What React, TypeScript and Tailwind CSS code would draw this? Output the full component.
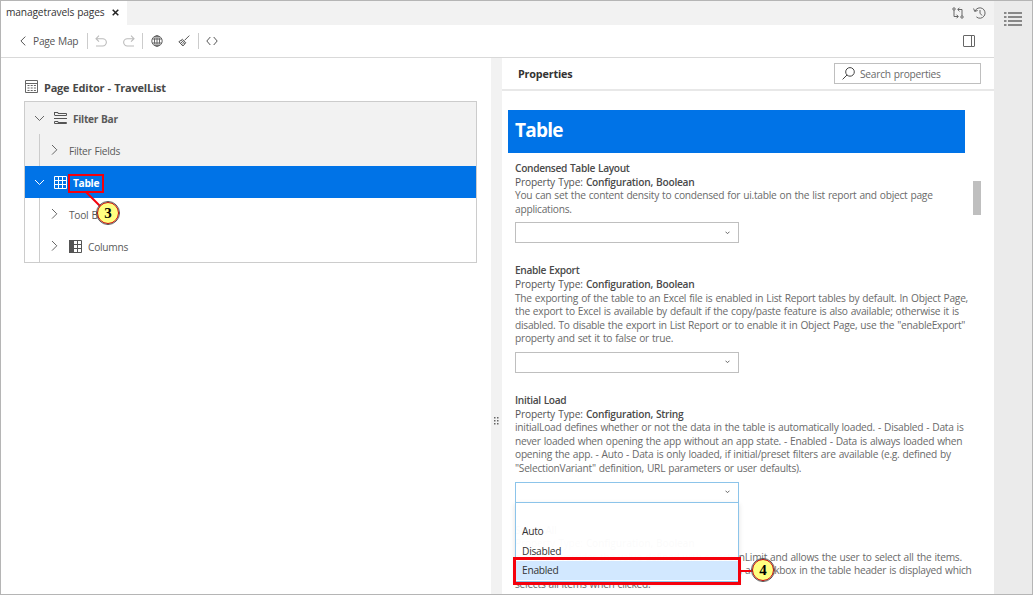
import type { ReactNode } from "react";

function ChevronDown({ className }: { className: string }) {
  return (
    <svg width="11" height="7" viewBox="0 0 11 7" fill="none" stroke="currentColor" strokeWidth="1" className={className}>
      <path d="M1 1 5.5 5.5 10 1" />
    </svg>
  );
}

function ChevronRight() {
  return (
    <svg width="7" height="12" viewBox="0 0 7 12" fill="none" stroke="currentColor" strokeWidth="1" className="shrink-0 text-[#666]">
      <path d="M1 1 5.8 5.8 1 10.6" />
    </svg>
  );
}

function TopBar() {
  return (
    <div className="flex h-6 shrink-0 justify-between bg-[#f2f2f2]">
      <div className="flex w-[126px] items-center bg-white pl-[5px] text-[#333]">
        <span className="w-[106px] whitespace-nowrap tracking-[-0.14px]">managetravels pages</span>
        <svg width="7" height="7" viewBox="0 0 7 7" stroke="#222" strokeWidth="1.5" className="mb-[2px]">
          <path d="M.7.7l5.6 5.6M6.3.7.7 6.3" />
        </svg>
      </div>
      <div className="flex items-center gap-[9px] pb-px pr-[8px] text-[#666]">
        <svg width="12" height="12" viewBox="0 0 12 12" fill="none" stroke="currentColor" strokeWidth="1">
          <circle cx="2" cy="2" r="1.2" />
          <circle cx="10" cy="10" r="1.2" />
          <path d="M2 3.2v6.3h4M4.5 7.7 6.3 9.5 4.5 11.3M10 8.8V2.5H6M7.5.7 5.7 2.5 7.5 4.3" />
        </svg>
        <svg width="13" height="12" viewBox="0 0 13 12" fill="none" stroke="currentColor" strokeWidth="1">
          <path d="M2 4.2A5.2 5.2 0 1 1 3.4 9.9M.6 1.5 1.7 4.4 4.7 3.5M7 3v3.2L9 8.5" />
        </svg>
      </div>
    </div>
  );
}

function Divider() {
  return <div className="h-4 w-px shrink-0 bg-[#ccc]" />;
}

function Toolbar() {
  return (
    <div className="flex h-[33px] shrink-0 items-center border-b border-[#d9d9d9] pl-[19px] pr-[19px] text-[#555]">
      <svg width="6" height="10" viewBox="0 0 6 10" fill="none" stroke="currentColor" strokeWidth="1">
        <path d="M5.3.6.9 5l4.4 4.4" />
      </svg>
      <span className="ml-[7px] mt-[2px] w-[54px]">Page Map</span>
      <Divider />
      <svg width="12" height="12" viewBox="0 0 12 12" fill="none" stroke="#bbb" strokeWidth="1.1" className="ml-[7px]">
        <path d="M4 .7 1 3.7l3 3M1 3.700h6.700a3.600 3.600 0 0 1 0 7.300H1" />
      </svg>
      <svg width="12" height="12" viewBox="0 0 12 12" fill="none" stroke="#bbb" strokeWidth="1.1" className="ml-[16px]">
        <path d="M8 .7l3 3-3 3M11 3.700H4.300a3.600 3.600 0 0 0 0 7.300H11" />
      </svg>
      <div className="ml-[7px]"><Divider /></div>
      <svg width="12" height="12" viewBox="0 0 12 12" fill="none" stroke="#555" strokeWidth=".9" className="ml-2">
        <circle cx="6" cy="6" r="5.2" />
        <ellipse cx="6" cy="6" rx="2.5" ry="5.2" />
        <path d="M6 .8v10.4M1.3 4h9.4M1.3 8h9.4" />
      </svg>
      <svg width="12" height="12" viewBox="0 0 12 12" fill="none" stroke="#555" strokeWidth="1" className="ml-[15px]">
        <path d="M11.3.6 6.6 5.3M4.4 4.3l3.4 3.4-.8 1-3.7-3.5ZM3.3 5.2.9 6.7l4 4.3L7 8.7M2.5 8.2l1.700-1.300M3.800 9.700l1.400-1.500" />
      </svg>
      <div className="ml-2"><Divider /></div>
      <svg width="12" height="10" viewBox="0 0 12 10" fill="none" stroke="#555" strokeWidth="1" className="ml-[7px]">
        <path d="M4.3 1 .8 5l3.500 4M7.700 1l3.500 4-3.500 4" />
      </svg>
      <svg width="12" height="12" viewBox="0 0 12 12" fill="none" stroke="#666" strokeWidth="1" className="ml-auto">
        <rect x=".5" y=".5" width="11" height="11" rx=".5" />
        <path d="M8.500.5v11" />
      </svg>
    </div>
  );
}

function PageEditor() {
  return (
    <section className="flex w-[490px] shrink-0 flex-col pl-[23px] pr-[14px] pt-[22px] text-[#5a5a5a]">
      <h2 className="flex h-[14px] items-center pl-px text-[11px] font-bold tracking-[-0.22px] text-[#484848]">
        <svg width="13" height="13" viewBox="0 0 13 13" fill="none" stroke="#666" strokeWidth="1" className="mb-px mr-[6px]">
          <path d="M.5.5h12v12H.5ZM.5 3.500h12" />
          <path d="M2.500 5.500h8.500M2.500 8h8.500M2.500 10.500h8.500" strokeWidth="1.200" strokeDasharray="2 1.200" />
        </svg>
        <span className="mt-px">Page Editor - TravelList</span>
      </h2>
      <div className="mt-[7px] h-[162px] border border-[#ccc]">
        <div className="flex h-8 items-center bg-[#f2f2f2] pl-[9px]">
          <ChevronDown className="text-[#666]" />
          <svg width="13" height="12" viewBox="0 0 13 12" fill="none" stroke="#555" strokeWidth="1" className="ml-[9px]">
            <path d="M.5 0v3M0 .5h4v1h8.500v2H.5M0 6.500h13M.5 9.500H4v1h8.500v1H.5Z" />
          </svg>
          <span className="ml-[6px] mt-[3px] font-bold tracking-[-0.3px]">Filter Bar</span>
        </div>
        <div className="h-8 bg-[#f2f2f2] pl-[14px]">
          <div className="flex h-8 items-center border-l border-[#ccc] pl-[11px]">
            <ChevronRight />
            <span className="ml-[11px] mt-[3px]">Filter Fields</span>
          </div>
        </div>
        <div className="flex h-8 items-center bg-[#0073e7] pl-[9px] text-white">
          <ChevronDown className="text-white" />
          <svg width="13" height="13" viewBox="0 0 13 13" fill="none" stroke="white" strokeWidth="1" className="ml-[9px]">
            <path d="M.5.5h12v12H.5ZM4.500.5v12M8.500.5v12M.5 4.500h12M.5 8.500h12" />
          </svg>
          <span className="ml-[6px] mt-[3px] font-bold tracking-[-0.3px]">Table</span>
        </div>
        <div className="pl-[14px]">
          <div className="flex h-8 items-center border-l border-[#ccc] pl-[11px]">
            <ChevronRight />
            <span className="ml-[11px] mt-[3px]">Tool Bar</span>
          </div>
          <div className="flex h-8 items-center border-l border-[#ccc] pl-[11px]">
            <ChevronRight />
            <svg width="13" height="13" viewBox="0 0 13 13" fill="none" stroke="#555" strokeWidth="1" className="ml-[11px]">
              <path d="M0 0h4v13H0Z" fill="#555" stroke="none" />
              <path d="M.5.5h12v12H.5ZM4.500.5v12M8.500.5v12M4.500 4.500h8M4.500 8.500h8" />
            </svg>
            <span className="ml-[6px] mt-[3px]">Columns</span>
          </div>
        </div>
      </div>
    </section>
  );
}

function Select({ active = false, children }: { active?: boolean; children?: ReactNode }) {
  return (
    <div className={`relative mt-[6px] flex h-[21px] w-[224px] items-center justify-end border bg-white pr-[8px] ${active ? "border-[#8cc4ea]" : "border-[#bfbfbf]"}`}>
      <svg width="5" height="4" viewBox="0 0 5 4" fill="none" stroke="#666" strokeWidth="1">
        <path d="M.5.7 2.5 2.7 4.5.7" />
      </svg>
      {children}
    </div>
  );
}

type PropertyProps = { title: string; type: string; lines: string[]; children?: ReactNode };

function Property({ title, type, lines, children }: PropertyProps) {
  return (
    <div className="mb-[21px] text-[#6a6a6a]">
      <h4 className="font-semibold tracking-[-0.33px] text-[#4a4a4a]">{title}</h4>
      <p className="tracking-[-0.15px] text-[#555]">
        Property Type: <b className="font-semibold tracking-[-0.24px] text-[#4a4a4a]">{type}</b>
      </p>
      {lines.map((line) => (
        <p key={line} className="whitespace-nowrap">{line}</p>
      ))}
      {children}
    </div>
  );
}

function Options() {
  return (
    <ul className="absolute -left-px top-[19px] z-10 w-[224px] border border-[#8cc4ea] bg-white/98 pb-px text-[#333] shadow-[0_2px_5px_rgba(0,0,0,0.12)]">
      <li className="h-[20px]" />
      {["Auto", "Disabled", "Enabled"].map((option) => (
        <li key={option} className={`flex h-[19.3px] items-center pl-[6px] ${option === "Enabled" ? "bg-[#d2e8ff]" : ""}`}>
          {option}
        </li>
      ))}
    </ul>
  );
}

function Properties() {
  return (
    <section className="flex min-w-0 flex-1 flex-col">
      <header className="flex h-[33px] shrink-0 items-center justify-between border-b-2 border-[#e8e8e8] pl-4 pr-[13px]">
        <h3 className="text-[10.8px] font-bold tracking-[-0.18px] text-[#333]">Properties</h3>
        <label className="flex h-[21px] w-[147px] items-center border border-[#bfbfbf] pl-[7px] text-[#6a6a6a]">
          <svg width="13" height="13" viewBox="0 0 13 13" fill="none" stroke="#444" strokeWidth="1">
            <circle cx="8" cy="4.9" r="4.3" />
            <path d="M5 8 .6 12.4" />
          </svg>
          <span className="ml-[5px] mt-[2px]">Search properties</span>
        </label>
      </header>
      <div className="flex min-h-0 flex-1 justify-between pr-[13px] pt-[19px]">
        <div className="w-[463px] pl-[6px]">
          <h1 className="flex h-[43px] items-center bg-[#0073e7] pb-px pl-[7px] text-[19px] font-bold tracking-[-0.75px] text-white">Table</h1>
          <div className="pl-[7px] pt-[9px]">
            <Property
              title="Condensed Table Layout"
              type="Configuration, Boolean"
              lines={[
                "You can set the content density to condensed for ui.table on the list report and object page",
                "applications.",
              ]}
            >
              <Select />
            </Property>
            <Property
              title="Enable Export"
              type="Configuration, Boolean"
              lines={[
                "The exporting of the table to an Excel file is enabled in List Report tables by default. In Object Page,",
                "the export to Excel is available by default if the copy/paste feature is also available; otherwise it is",
                "disabled. To disable the export in List Report or to enable it in Object Page, use the \"enableExport\"",
                "property and set it to false or true.",
              ]}
            >
              <Select />
            </Property>
            <Property
              title="Initial Load"
              type="Configuration, String"
              lines={[
                "initialLoad defines whether or not the data in the table is automatically loaded. - Disabled - Data is",
                "never loaded when opening the app without an app state. - Enabled - Data is always loaded when",
                "opening the app. - Auto - Data is only loaded, if initial/preset filters are available (e.g. defined by",
                "\"SelectionVariant\" definition, URL parameters or user defaults).",
              ]}
            >
              <Select active>
                <Options />
              </Select>
            </Property>
            <Property
              title="Select All"
              type="Configuration, Boolean"
              lines={[
                "selectAll overrides the value defined with selectionLimit and allows the user to select all the items.",
                "When set to true, the select all feature is enabled, a checkbox in the table header is displayed which",
                "selects all items when clicked.",
              ]}
            />
          </div>
        </div>
        <div className="mt-[71px] h-[34px] w-2 bg-[#bfbfbf]" />
      </div>
    </section>
  );
}

function Badge({ children }: { children: ReactNode }) {
  return (
    <span className="flex h-[22px] w-[22px] items-center justify-center rounded-full border-[1.5px] border-[#d00000] bg-[#ffff80] font-['Liberation_Serif',serif] text-[15px] font-bold leading-none tracking-normal text-black outline outline-[0.5px] outline-[#555]">
      {children}
    </span>
  );
}

export default function App() {
  return (
    <div className="relative flex h-[595px] w-[1033px] overflow-hidden border border-[#b5b5b5] bg-white font-['Open_Sans',sans-serif] text-[10.2px] leading-[13.6px] tracking-[-0.25px] [word-spacing:0.6px]">
      <main className="flex min-w-0 flex-1 flex-col">
        <TopBar />
        <Toolbar />
        <div className="flex min-h-0 flex-1">
          <PageEditor />
          <div className="flex w-[11px] shrink-0 items-center justify-center bg-[#f2f2f2]">
            <svg width="5" height="8" viewBox="0 0 5 8" fill="#666" className="mt-[190px]">
              <path d="M0 0h1.500v1.500H0ZM3 0h1.500v1.500H3ZM0 3h1.500v1.500H0ZM3 3h1.500v1.500H3ZM0 6h1.500v1.500H0ZM3 6h1.500v1.500H3Z" />
            </svg>
          </div>
          <Properties />
        </div>
      </main>
      <aside className="flex w-[38px] shrink-0 justify-center bg-[#ebebeb] pt-[11px]">
        <svg width="18" height="15" viewBox="0 0 18 15" fill="#888">
          <path d="M0 0h2.500v2H0ZM4 0h14v2H4ZM0 4h2.500v2H0ZM4 4h14v2H4ZM0 8h2.500v2H0ZM4 8h14v2H4ZM0 12h2.500v2H0ZM4 12h14v2H4Z" />
        </svg>
      </aside>

      <div className="pointer-events-none absolute left-[67px] top-[172.5px] z-20 h-[19px] w-[36px] border-2 border-[#f5000c]" />
      <svg width="20" height="20" viewBox="0 0 20 20" className="pointer-events-none absolute left-[84px] top-[190px] z-20">
        <path d="M1 1 17 17" stroke="#f5000c" strokeWidth="2" />
      </svg>
      <div className="absolute left-[96px] top-[201px] z-20"><Badge>3</Badge></div>
      <div className="pointer-events-none absolute left-[512px] top-[556px] z-20 h-[28px] w-[228px] border-[3px] border-[#f5000c]" />
      <div className="absolute left-[740px] top-[569px] z-20 h-[2px] w-[12px] bg-[#f5000c]" />
      <div className="absolute left-[751px] top-[558px] z-20"><Badge>4</Badge></div>
    </div>
  );
}
